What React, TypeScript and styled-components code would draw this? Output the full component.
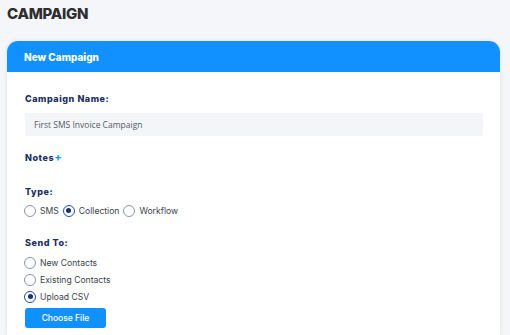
import * as React from 'react';
import styled, { createGlobalStyle } from 'styled-components';

const GlobalStyle = createGlobalStyle`
  html, body {
    margin: 0;
    padding: 0;
    background: #f5f6fa;
    font-family: Inter, "Noto Sans", sans-serif;
  }
`;

const Page = styled.div`
  padding: 5px 10px 0 7px;
`;

const Title = styled.h1`
  margin: 0;
  font-size: 15px;
  line-height: 18px;
  font-weight: 800;
  color: #2e2e30;
  letter-spacing: -0.3px;
`;

const Card = styled.section`
  margin-top: 18px;
  background: #ffffff;
  border-radius: 11px 11px 0 0;
  box-shadow: 0 0 4px rgba(30, 40, 80, 0.1);
  overflow: hidden;
`;

const CardHeader = styled.div`
  height: 31px;
  background: #1190ff;
  display: flex;
  align-items: center;
  padding: 0 17px;
  color: #ffffff;
  font-size: 10px;
  font-weight: 800;
`;

const CardBody = styled.div`
  padding: 21px 17px 8px 18px;
  display: flex;
  flex-direction: column;
`;

const Label = styled.div<{ $gap?: number }>`
  font-size: 9px;
  line-height: 12px;
  font-weight: 800;
  letter-spacing: 0.55px;
  color: #1b2f60;
  margin-bottom: ${({ $gap }) => $gap ?? 0}px;
`;

const Plus = styled.span`
  color: #1190ff;
  font-size: 11px;
  font-weight: 700;
`;

const TextInput = styled.div`
  height: 23px;
  background: #f4f5f9;
  border-radius: 2px;
  display: flex;
  align-items: center;
  padding: 0 9px;
  font-family: "Open Sans", sans-serif;
  font-size: 8.5px;
  color: #555b66;
`;

const Section = styled.div<{ $top: number }>`
  margin-top: ${({ $top }) => $top}px;
`;

const RadioRow = styled.div`
  display: flex;
  align-items: center;
  gap: 5px;
`;

const RadioList = styled.div`
  display: flex;
  flex-direction: column;
  gap: 4px;
`;

const RadioItem = styled.label`
  display: flex;
  align-items: center;
  gap: 4px;
  height: 13px;
  font-size: 8.6px;
  color: #3a3f4a;
`;

const Circle = styled.span<{ $checked: boolean }>`
  width: 10px;
  height: 10px;
  margin-left: -1px;
  border-radius: 50%;
  border: 1px solid ${({ $checked }) => ($checked ? '#1b4fa8' : '#8a94ac')};
  display: flex;
  align-items: center;
  justify-content: center;
  box-sizing: content-box;

  &::after {
    content: '';
    width: 5px;
    height: 5px;
    border-radius: 50%;
    background: #1b2f70;
    display: ${({ $checked }) => ($checked ? 'block' : 'none')};
  }
`;

const FileButton = styled.button`
  margin-top: 5px;
  width: 81px;
  height: 20px;
  border: none;
  border-radius: 3px;
  background: #1190ff;
  color: #ffffff;
  font-family: Inter, "Noto Sans", sans-serif;
  font-size: 8.5px;
  font-weight: 500;
`;

const Radio = ({ label, checked = false }: { label: string; checked?: boolean }) => (
  <RadioItem>
    <Circle $checked={checked} />
    {label}
  </RadioItem>
);

export default function App() {
  return (
    <>
      <GlobalStyle />
      <Page>
        <Title>CAMPAIGN</Title>
        <Card>
          <CardHeader>New Campaign</CardHeader>
          <CardBody>
            <Label $gap={8}>Campaign Name:</Label>
            <TextInput>First SMS Invoice Campaign</TextInput>
            <Section $top={15}>
              <Label>Notes<Plus>+</Plus></Label>
            </Section>
            <Section $top={22}>
              <Label $gap={6}>Type:</Label>
              <RadioRow>
                <Radio label="SMS" />
                <Radio label="Collection" checked />
                <Radio label="Workflow" />
              </RadioRow>
            </Section>
            <Section $top={20}>
              <Label $gap={7}>Send To:</Label>
              <RadioList>
                <Radio label="New Contacts" />
                <Radio label="Existing Contacts" />
                <Radio label="Upload CSV" checked />
              </RadioList>
              <FileButton>Choose File</FileButton>
            </Section>
          </CardBody>
        </Card>
      </Page>
    </>
  );
}
